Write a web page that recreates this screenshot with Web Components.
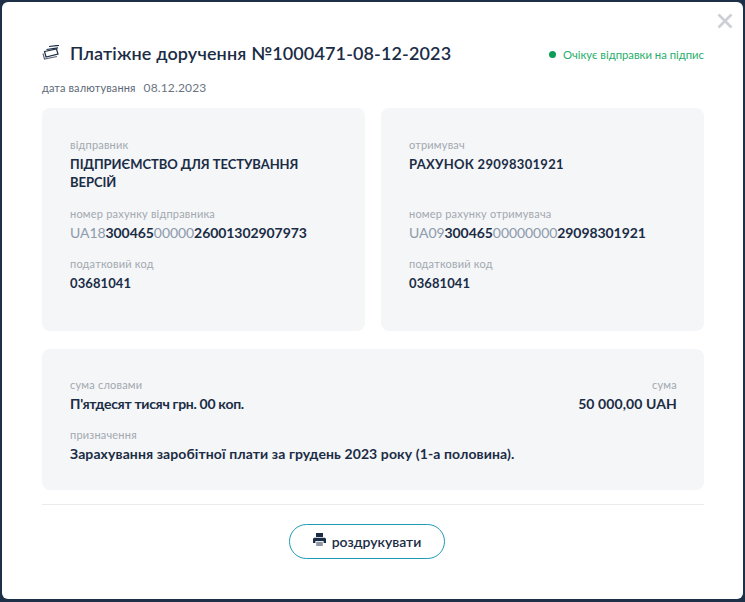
<!DOCTYPE html>
<html lang="uk">
<head>
<meta charset="utf-8">
<title>Платіжне доручення</title>
<style>
	html, body { margin: 0; height: 100%; }
	body {
		background: #1d3048;
		padding: 2px;
		box-sizing: border-box;
		font-family: Lato, "Noto Sans", sans-serif;
		color: #1b2c45;
		overflow: hidden;
	}
	.name { --value-size: 13px; --value-spacing: -0.05px; --name-height: 37px; }
	.name.short { --value-spacing: 0.3px; }
	.iban { --value-spacing: -0.07px; }
	.code { --value-size: 13px; --value-spacing: 0.1px; }
</style>
</head>
<body>
<payment-modal>
	<span slot="title">Платіжне доручення №1000471-08-12-2023</span>
	<span slot="status">Очікує відправки на підпис</span>
	<span slot="date">08.12.2023</span>
	<party-card>
		<info-field label="відправник" class="name">ПІДПРИЄМСТВО ДЛЯ ТЕСТУВАННЯ ВЕРСІЙ</info-field>
		<info-field label="номер рахунку відправника" class="iban"><iban-number value="UA18,300465,00000,26001302907973"></iban-number></info-field>
		<info-field label="податковий код" class="code">03681041</info-field>
	</party-card>
	<party-card>
		<info-field label="отримувач" class="name short">РАХУНОК 29098301921</info-field>
		<info-field label="номер рахунку отримувача" class="iban"><iban-number value="UA09,300465,00000000,29098301921"></iban-number></info-field>
		<info-field label="податковий код" class="code">03681041</info-field>
	</party-card>
	<summary-card slot="summary"></summary-card>
</payment-modal>

<script>
// small label + bold value
class InfoField extends HTMLElement {
	constructor() {
		super();
		this.attachShadow({ mode: 'open' });
		this.shadowRoot.innerHTML = `
      <style>
        :host { display: block; }
        .label { font-size: 11px; line-height: 14px; color: #a3a8af; letter-spacing: 0.2px; }
        .value {
          font-size: var(--value-size, 14px);
          letter-spacing: var(--value-spacing, 0.1px);
          min-height: var(--name-height, 18px);
          line-height: 18px;
          font-weight: 700;
          color: #1b2c45;
          margin-top: 3px;
        }
      </style>
      <div class="label">${this.getAttribute('label') || ''}</div>
      <div class="value"><slot></slot></div>
    `;
	}
}
customElements.define('info-field', InfoField);

// account number, every other chunk is greyed out
class IbanNumber extends HTMLElement {
	constructor() {
		super();
		this.attachShadow({ mode: 'open' });
		const parts = (this.getAttribute('value') || '').split(',');
		const html = parts
			.map((part, i) => (i % 2 === 0 ? `<span class="dim">${part}</span>` : `<b>${part}</b>`))
			.join('');
		this.shadowRoot.innerHTML = `
      <style>
        :host { display: inline; }
        .dim { color: #8d9aab; font-weight: 400; }
        b { font-weight: 700; }
      </style>
      ${html}
    `;
	}
}
customElements.define('iban-number', IbanNumber);

class PartyCard extends HTMLElement {
	constructor() {
		super();
		this.attachShadow({ mode: 'open' });
		this.shadowRoot.innerHTML = `
      <style>
        :host {
          display: flex;
          flex-direction: column;
          gap: 15px;
          box-sizing: border-box;
          height: 223px;
          padding: 30px 28px 0;
          background: #f4f6f8;
          border-radius: 8px;
        }
      </style>
      <slot></slot>
    `;
	}
}
customElements.define('party-card', PartyCard);

class SummaryCard extends HTMLElement {
	constructor() {
		super();
		this.attachShadow({ mode: 'open' });
		this.shadowRoot.innerHTML = `
      <style>
        :host {
          display: block;
          box-sizing: border-box;
          height: 141px;
          padding: 29px 27px 0 28px;
          background: #f4f6f8;
          border-radius: 8px;
        }
        .row { display: flex; justify-content: space-between; margin-bottom: 15px; }
        .words { --value-spacing: -0.3px; }
        .right { text-align: right; }
      </style>
      <div class="row">
        <info-field class="words" label="сума словами">П'ятдесят тисяч грн. 00 коп.</info-field>
        <info-field class="right" label="сума">50 000,00 UAH</info-field>
      </div>
      <info-field label="призначення">Зарахування заробітної плати за грудень 2023 року (1-а половина).</info-field>
    `;
	}
}
customElements.define('summary-card', SummaryCard);

class PrintButton extends HTMLElement {
	constructor() {
		super();
		this.attachShadow({ mode: 'open' });
		this.shadowRoot.innerHTML = `
      <style>
        :host {
          display: flex;
          align-items: center;
          justify-content: center;
          gap: 6px;
          box-sizing: border-box;
          width: 156px;
          height: 35px;
          border: 1px solid #1f9bb5;
          border-radius: 18px;
          font-size: 14px;
          font-weight: 600;
          color: #1b2c45;
          background: #fff;
        }
        svg { width: 13px; height: 14px; margin-top: -3px; }
      </style>
      <svg viewBox="0 0 13 14" aria-hidden="true">
        <path fill="#1b2c45" d="M3 0h7v4H3zM1.500 4.800h10c.8 0 1.500.7 1.500 1.500V10h-2.400V8H2.400v2H0V6.300c0-.8.7-1.500 1.500-1.500z"/>
        <path fill="#8d97a5" d="M3.200 8.800h6.600V13H3.200z"/>
      </svg>
      <slot></slot>
    `;
	}
}
customElements.define('print-button', PrintButton);

class PaymentModal extends HTMLElement {
	constructor() {
		super();
		this.attachShadow({ mode: 'open' });
		this.shadowRoot.innerHTML = `
      <style>
        :host {
          display: block;
          position: relative;
          box-sizing: border-box;
          width: 741px;
          height: 597px;
          padding: 39px 39px 0 40px;
          background: #fff;
          border-radius: 6px;
        }
        .close { position: absolute; top: 11px; right: 10px; width: 16px; height: 16px; }
        .head { display: flex; align-items: center; height: 24px; }
        .title { font-size: 18px; font-weight: 600; margin-left: 8px; letter-spacing: 0.13px; color: #1b2c45; }
        .status { margin-left: auto; display: flex; align-items: center; gap: 7px; font-size: 11.300px; color: #1fae6b; margin-top: 2px; }
        .dot { width: 7px; height: 7px; border-radius: 50%; background: #0d9d55; }
        .date { display: flex; align-items: center; gap: 8px; margin-top: 14px; height: 16px; font-size: 11px; letter-spacing: 0.12px; color: #5d6877; }
        .date span { font-size: 12px; color: #6b7583; letter-spacing: 0.15px; }
        .cards { display: grid; grid-template-columns: 323px 323px; gap: 16px; margin-top: 13px; }
        .summary { margin-top: 18px; }
        hr { border: 0; border-top: 1px solid #e9eaec; margin: 14px 0 0; }
        .foot { display: flex; justify-content: center; margin: 19px 12px 0 0; }
      </style>
      <svg class="close" viewBox="0 0 16 16" aria-hidden="true">
        <path d="M1.500 1.500l13 13M14.500 1.500l-13 13" stroke="#ccd0d6" stroke-width="2.600" fill="none"/>
      </svg>
      <div class="head">
        <svg width="20" height="16" viewBox="0 0 20 16" aria-hidden="true" fill="none" stroke="#1b2c45" stroke-width="1.200">
          <path d="M7 1.500l10-1.200M4.500 4.500L16 2.800"/>
          <path d="M2.500 6.500L14.500 4l1.500 5-12 3z"/>
          <path d="M1 8.500l1.500 5.500 12.500-2.500" stroke="#5d6877"/>
        </svg>
        <div class="title"><slot name="title"></slot></div>
        <div class="status"><i class="dot"></i><slot name="status"></slot></div>
      </div>
      <div class="date">дата валютування <span><slot name="date"></slot></span></div>
      <div class="cards"><slot></slot></div>
      <div class="summary"><slot name="summary"></slot></div>
      <hr>
      <div class="foot"><print-button>роздрукувати</print-button></div>
    `;
	}
}
customElements.define('payment-modal', PaymentModal);
</script>
</body>
</html>
